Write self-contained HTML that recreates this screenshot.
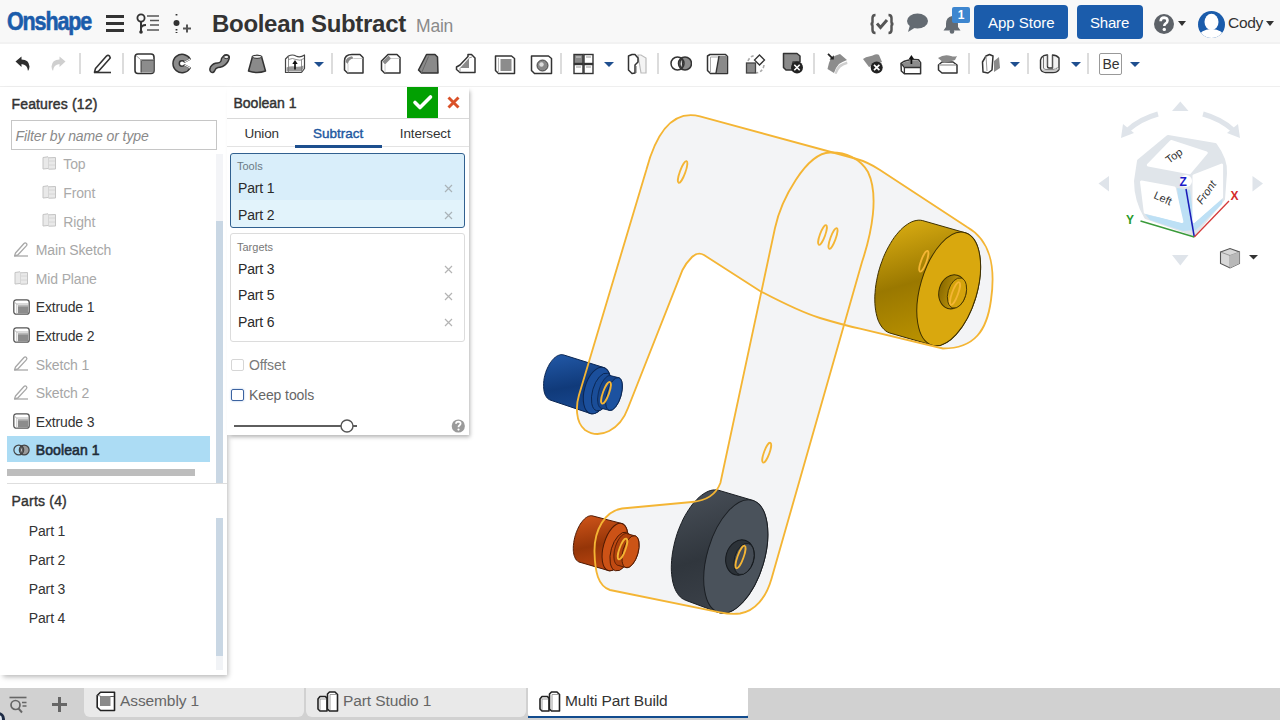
<!DOCTYPE html>
<html><head><meta charset="utf-8">
<style>
*{box-sizing:border-box;margin:0;padding:0}
html,body{width:1280px;height:720px;overflow:hidden;background:#fff;font-family:"Liberation Sans",sans-serif;color:#333;position:relative}
.abs{position:absolute}
.t{position:absolute;white-space:nowrap;line-height:1}
#topbar{position:absolute;left:0;top:0;width:1280px;height:44px;background:#f8f8f8;border-bottom:2px solid #f2f2f2}
#toolbar{position:absolute;left:0;top:44px;width:1280px;height:43px;background:#fff;border-bottom:1px solid #efefef}
.sep{position:absolute;top:53px;width:2px;height:21px;background:#dcdcdc}
.caret{position:absolute;width:0;height:0;border-left:5px solid transparent;border-right:5px solid transparent;border-top:5px solid #1f4f8f}
#panel{position:absolute;left:0;top:87px;width:227px;height:588px;background:#fff;box-shadow:2px 3px 5px -1px rgba(0,0,0,.28)}
#dlg{position:absolute;left:227px;top:87px;width:242px;height:348px;background:#fff;box-shadow:2px 3px 4px -1px rgba(0,0,0,.3)}
#bottombar{position:absolute;left:0;top:688px;width:1280px;height:32px;background:#d1d1d1}
.tab{position:absolute;top:688px;height:29px;background:#e9e9e9;border-radius:0 0 6px 6px}
</style></head><body>

<div id="topbar">
 <div class="t" style="left:7px;top:9px;font-size:25px;font-weight:bold;color:#1b5cab;letter-spacing:-1.3px;-webkit-text-stroke:0.6px #1b5cab;transform:scaleX(0.86);transform-origin:0 0">Onshape</div>
 <!-- hamburger -->
 <div class="abs" style="left:106px;top:15px;width:18px;height:3px;background:#333"></div>
 <div class="abs" style="left:106px;top:22px;width:18px;height:3px;background:#333"></div>
 <div class="abs" style="left:106px;top:29px;width:18px;height:3px;background:#333"></div>
 <!-- tree icon -->
 <svg class="abs" style="left:136px;top:13px" width="24" height="22" viewBox="0 0 24 22">
  <circle cx="5" cy="5" r="3.6" fill="none" stroke="#333" stroke-width="1.8"/>
  <path d="M5 8.6 V18.5" stroke="#333" stroke-width="2" fill="none"/>
  <path d="M5 16 Q5 12 10 12" stroke="#333" stroke-width="1.8" fill="none"/>
  <circle cx="5" cy="19" r="1.8" fill="#333"/>
  <path d="M11 3h12M14 7.5h9M14 12h9M11 17h12" stroke="#555" stroke-width="1.6"/>
 </svg>
 <!-- insert icon -->
 <svg class="abs" style="left:172px;top:13px" width="20" height="22" viewBox="0 0 20 22">
  <path d="M4.5 1v3M4.5 16v4" stroke="#333" stroke-width="1.8" stroke-dasharray="1.6 1.4"/>
  <circle cx="4.5" cy="10" r="3" fill="#333"/>
  <path d="M11 15.5h8M15 11.5v8" stroke="#555" stroke-width="2"/>
 </svg>
 <div class="t" style="left:212px;top:12px;font-size:24px;font-weight:bold;color:#333;letter-spacing:-0.3px">Boolean Subtract</div>
 <div class="t" style="left:416px;top:18px;font-size:17.5px;color:#8a8a8a;letter-spacing:-0.2px">Main</div>
 <!-- right icons -->
 <svg class="abs" style="left:869px;top:13px" width="26" height="22" viewBox="0 0 26 22">
  <path d="M6.5 2 Q3.5 2 3.5 5 V9 Q3.5 11 1.5 11 Q3.5 11 3.5 13 V17 Q3.5 20 6.5 20" fill="none" stroke="#555" stroke-width="2.5"/>
  <path d="M19.5 2 Q22.5 2 22.5 5 V9 Q22.5 11 24.5 11 Q22.5 11 22.5 13 V17 Q22.5 20 19.5 20" fill="none" stroke="#555" stroke-width="2.5"/>
  <path d="M8 10.5 L11.5 14.5 L18 7" fill="none" stroke="#555" stroke-width="3"/>
 </svg>
 <svg class="abs" style="left:906px;top:13px" width="23" height="20" viewBox="0 0 23 20">
  <ellipse cx="11.5" cy="8" rx="10.5" ry="7.5" fill="#646b72"/>
  <path d="M4 12 L2 19 L10 14 Z" fill="#646b72"/>
 </svg>
 <svg class="abs" style="left:942px;top:14px" width="22" height="20" viewBox="0 0 22 20">
  <path d="M10 2 Q4 3 4 10 V13 L1.5 16.5 H18.5 L16 13 V10 Q16 3 10 2Z" fill="#646b72"/>
  <circle cx="10" cy="17.5" r="2.3" fill="#646b72"/>
 </svg>
 <div class="abs" style="left:952px;top:7px;width:18px;height:16px;background:#3d86cf;border-radius:2px;color:#fff;font-size:12px;font-weight:bold;text-align:center;line-height:16px">1</div>
 <div class="abs" style="left:974px;top:5px;width:94px;height:34px;background:#1b5cab;border-radius:4px"></div>
 <div class="t" style="left:988px;top:15px;font-size:15px;color:#fff">App Store</div>
 <div class="abs" style="left:1077px;top:5px;width:66px;height:34px;background:#1b5cab;border-radius:4px"></div>
 <div class="t" style="left:1090px;top:15px;font-size:15px;color:#fff;letter-spacing:-0.2px">Share</div>
 <svg class="abs" style="left:1153px;top:13px" width="22" height="22" viewBox="0 0 22 22">
  <circle cx="11" cy="11" r="10" fill="#5d6268"/>
  <path d="M7.6 8.2 Q7.8 4.6 11.2 4.6 Q14.6 4.8 14.5 7.8 Q14.4 9.6 12.5 10.6 Q11.3 11.3 11.3 13" fill="none" stroke="#fff" stroke-width="2.6"/>
  <circle cx="11.3" cy="16.4" r="1.7" fill="#fff"/>
 </svg>
 <div class="caret" style="left:1178px;top:21px;border-top-color:#333;border-left-width:4.5px;border-right-width:4.5px"></div>
 <svg class="abs" style="left:1197px;top:10px" width="29" height="29" viewBox="0 0 29 29">
  <defs><clipPath id="avc"><circle cx="14.5" cy="14.5" r="13.5"/></clipPath></defs>
  <circle cx="14.5" cy="14.5" r="13.5" fill="#1b5cab"/>
  <g clip-path="url(#avc)" fill="#fff">
   <ellipse cx="14.5" cy="12" rx="7" ry="8.3"/>
   <path d="M1 29 Q2 19.5 14.5 19 Q27 19.5 28 29Z"/>
  </g>
 </svg>
 <div class="t" style="left:1228px;top:15px;font-size:15.5px;color:#333;letter-spacing:-0.3px">Cody</div>
 <div class="caret" style="left:1266px;top:21px;border-top-color:#333;border-left-width:4.5px;border-right-width:4.5px"></div>
</div>
<div id="toolbar"></div>
<div id="tbicons">
<svg class="abs" style="left:14px;top:55px" width="17" height="17" viewBox="0 0 17 17"><path d="M1.5 6.5 L7.5 1.5 V4.5 Q15 4.5 15.5 11.5 Q15.5 13.5 14 16 Q13.5 9.5 7.5 9 V12 Z" fill="#2e2e2e"/></svg>
<svg class="abs" style="left:50px;top:55px" width="17" height="17" viewBox="0 0 17 17"><path d="M15.5 6.5 L9.5 1.5 V4.5 Q2 4.5 1.5 11.5 Q1.5 13.5 3 16 Q3.5 9.5 9.5 9 V12 Z" fill="#cfcfcf"/></svg>
<div class="sep" style="left:79px"></div>
<div class="sep" style="left:122px"></div>
<div class="sep" style="left:331px"></div>
<div class="sep" style="left:560px"></div>
<div class="sep" style="left:657px"></div>
<div class="sep" style="left:813px"></div>
<div class="sep" style="left:968px"></div>
<div class="sep" style="left:1027px"></div>
<div class="sep" style="left:1087px"></div>
<svg class="abs" style="left:92px;top:53px" width="20" height="21" viewBox="0 0 20 21"><path d="M3.5 15.5 L14.5 3 Q16 1.6 17.5 3 Q18.8 4.5 17.4 6 L6.5 18.2 L2.5 19.2 Z" fill="none" stroke="#333" stroke-width="1.6" stroke-linejoin="round"/><path d="M2 19.5 H19" stroke="#333" stroke-width="1.6"/></svg>
<svg class="abs" style="left:134px;top:53px" width="21" height="22" viewBox="0 0 21 22"><rect x="1" y="1" width="19" height="19.5" rx="3" fill="#fff" stroke="#333" stroke-width="1.6"/><path d="M2 2.5 L6.5 6.5 H19.5 M6.5 6.5 V19.5" stroke="#999" stroke-width="0.9" fill="none"/><rect x="7.5" y="7.5" width="12" height="12" fill="#8c8c8c"/><path d="M7.5 7.5 H19.5 M7.5 7.5 V19.5" stroke="#555" stroke-width="0.9"/></svg>
<svg class="abs" style="left:172px;top:53px" width="20" height="21" viewBox="0 0 20 21"><path d="M18.2 6 A9.2 9.2 0 1 0 18.2 15 L12.5 12 Q11.5 13.2 10 13.2 A2.7 2.7 0 0 1 10 7.8 Q11.5 7.8 12.5 9 Z" fill="#8c8c8c" stroke="#333" stroke-width="1.5" stroke-linejoin="round"/><path d="M12.5 9 L18.2 6 M12.5 12 L18.2 15" stroke="#eee" stroke-width="1.2"/></svg>
<svg class="abs" style="left:208px;top:53px" width="23" height="22" viewBox="0 0 23 22"><path d="M3 19 Q1 17 2.5 14 Q5 10 9.5 10 Q12 10 13 8 Q13 5 15.5 3 Q17 1.5 19.5 2 Q22 3 21 6 Q19.5 11 14.5 13.5 Q12 14.5 10 14.5 Q7.5 15 6.5 18 Q5 20.5 3 19 Z" fill="#8c8c8c" stroke="#333" stroke-width="1.5" stroke-linejoin="round"/><ellipse cx="18.3" cy="4" rx="2.6" ry="1.6" fill="#eee" stroke="#333" stroke-width="1"/></svg>
<svg class="abs" style="left:247px;top:53px" width="20" height="21" viewBox="0 0 20 21"><path d="M5.5 3.5 Q10 1.5 14.5 3.5 L18.5 18 Q10 21 1.5 18 Z" fill="#8a8a8a" stroke="#333" stroke-width="1.5" stroke-linejoin="round"/><ellipse cx="10" cy="3.8" rx="4.5" ry="1.6" fill="#eee" stroke="#333" stroke-width="1"/></svg>
<svg class="abs" style="left:284px;top:52px" width="22" height="23" viewBox="0 0 22 23"><path d="M1.5 7 L4.5 4 Q8.5 2 12 4 Q16 6 20.5 3 V16.5 L17.5 20.5 H1.5 Z" fill="#fff" stroke="#444" stroke-width="1.2" stroke-linejoin="round"/><path d="M2.5 15.5 Q7 13.5 11 14.5 Q15 15.5 19.5 13.5 V16.5 L17 19.5 H2.5Z" fill="#999"/><path d="M4.5 4 V20.5 M4.5 7.5 Q8.5 5.5 12 7.5 Q16 9.5 20 6.5 M17.5 8 V20.5" fill="none" stroke="#777" stroke-width="0.8"/><path d="M11 17.5 V10" stroke="#111" stroke-width="1.7"/><path d="M8.3 12 L11 8 L13.7 12Z" fill="#111"/></svg>
<div class="caret" style="left:314px;top:62px"></div>
<svg class="abs" style="left:343px;top:53px" width="22" height="22" viewBox="0 0 22 22"><path d="M1.5 8 Q1.5 1.5 9 1.5 H17 L20 4.5 V20 H4.5 L1.5 17 Z" fill="#fff" stroke="#333" stroke-width="1.5" stroke-linejoin="round"/><path d="M2.5 9 Q3 4 9 3.2 L10.5 5.5 Q5.5 6 5 11 Z" fill="#8a8a8a"/><path d="M5 11 V19.5 M10.5 5.5 H19.5" stroke="#ccc" stroke-width="1"/></svg>
<svg class="abs" style="left:380px;top:53px" width="22" height="22" viewBox="0 0 22 22"><path d="M1.5 8 L8 1.5 H17 L20 4.5 V20 H4.5 L1.5 17 Z" fill="#fff" stroke="#333" stroke-width="1.5" stroke-linejoin="round"/><path d="M2.5 8.5 L8.5 2.5 L11 5.5 L5 11.5 Z" fill="#8a8a8a"/><path d="M5 11.5 V19.5 M11 5.5 H19.5" stroke="#ccc" stroke-width="1"/></svg>
<svg class="abs" style="left:417px;top:53px" width="23" height="22" viewBox="0 0 23 22"><path d="M1.5 17 L9.5 1.5 H18 L20.5 4 L21 20 H4.5 Z" fill="#8a8a8a" stroke="#333" stroke-width="1.5" stroke-linejoin="round"/><path d="M4.5 20 L11.5 3.5" stroke="#666" stroke-width="1"/></svg>
<svg class="abs" style="left:455px;top:53px" width="22" height="22" viewBox="0 0 22 22"><path d="M1.5 14 L5 12 L13 3.5 V1.5 H16.5 L20 5 V19.5 H5 L1.5 16.5 Z" fill="#fff" stroke="#333" stroke-width="1.5" stroke-linejoin="round"/><path d="M5 15 L14 5 V15 Z" fill="#8a8a8a"/><path d="M5 15 V19 M14 5 L17 4" stroke="#999" stroke-width="1"/></svg>
<svg class="abs" style="left:494px;top:53px" width="22" height="22" viewBox="0 0 22 22"><path d="M1.5 3 H17.5 L20.5 5.5 V20.5 H4.5 L1.5 17.5 Z" fill="#fff" stroke="#333" stroke-width="1.5" stroke-linejoin="round"/><rect x="6.5" y="6" width="11" height="12" fill="#8c8c8c"/><path d="M4.5 5 V20" stroke="#bbb" stroke-width="1"/></svg>
<svg class="abs" style="left:530px;top:53px" width="23" height="22" viewBox="0 0 23 22"><path d="M1.5 3 H18.5 L21.5 5.5 V20.5 H4.5 L1.5 17.5 Z" fill="#fff" stroke="#333" stroke-width="1.5" stroke-linejoin="round"/><circle cx="12.5" cy="12.5" r="5.5" fill="#888" stroke="#444" stroke-width="1"/><circle cx="11.5" cy="11.5" r="2.2" fill="#ddd"/></svg>
<svg class="abs" style="left:573px;top:53px" width="21" height="22" viewBox="0 0 21 22"><rect x="1" y="1.5" width="9" height="9" fill="#888" stroke="#333" stroke-width="1.4"/><rect x="11" y="1.5" width="9" height="9" fill="#fff" stroke="#333" stroke-width="1.4"/><rect x="1" y="11.5" width="9" height="9" fill="#fff" stroke="#333" stroke-width="1.4"/><rect x="11" y="11.5" width="9" height="9" fill="#fff" stroke="#333" stroke-width="1.4"/><path d="M3 4 H8 M13 4 H18 M3 14 H8 M13 14 H18" stroke="#bbb" stroke-width="1.5"/></svg>
<div class="caret" style="left:604px;top:62px"></div>
<svg class="abs" style="left:627px;top:53px" width="22" height="22" viewBox="0 0 22 22"><path d="M11 2 H14 L19 5 V20 H14 Z" fill="#f4f4f4" stroke="#bbb" stroke-width="1.2"/><path d="M1.5 3 L5 1.5 H8 L11 5 V9 L8 12 V20 L5 20.5 L1.5 17 Z" fill="#fff" stroke="#333" stroke-width="1.5" stroke-linejoin="round"/><path d="M9 13 V20" stroke="#666" stroke-width="1"/></svg>
<svg class="abs" style="left:670px;top:55px" width="22" height="17" viewBox="0 0 22 17"><circle cx="15" cy="8.5" r="6.5" fill="#8c8c8c" stroke="#333" stroke-width="1.5"/><circle cx="7.5" cy="8.5" r="6.5" fill="none" stroke="#333" stroke-width="1.5"/><path d="M11.3 3.2 Q8.8 8.5 11.3 13.8 Q13.6 8.5 11.3 3.2Z" fill="#fff" stroke="#333" stroke-width="1.2"/></svg>
<svg class="abs" style="left:706px;top:53px" width="23" height="22" viewBox="0 0 23 22"><path d="M1.5 3 L4 1.5 H19.5 L21.5 3.5 V20.5 H4.5 L1.5 17.5 Z" fill="#fff" stroke="#333" stroke-width="1.5" stroke-linejoin="round"/><path d="M13 3 H21 V20 H10 Z" fill="#8a8a8a"/><path d="M4.5 4 V20 M4.5 4 H13" stroke="#aaa" stroke-width="1"/><path d="M13 3 L10 20" stroke="#333" stroke-width="1.4"/></svg>
<svg class="abs" style="left:745px;top:53px" width="22" height="22" viewBox="0 0 22 22"><path d="M3 8 Q5 3 10 2.5 M19 12 Q18 19 11 20" fill="none" stroke="#aaa" stroke-width="1.6" stroke-dasharray="3 2"/><rect x="1.5" y="10" width="9" height="10" fill="#8a8a8a" stroke="#444" stroke-width="1.3"/><path d="M14.5 2 L19.5 7 L14.5 12 L9.5 7 Z" fill="#fff" stroke="#333" stroke-width="1.3"/></svg>
<svg class="abs" style="left:782px;top:52px" width="22" height="23" viewBox="0 0 22 23"><path d="M1.5 1.5 H15 L18 4 V10 H11 V18 H4 L1.5 15.5 Z" fill="#8a8a8a" stroke="#333" stroke-width="1.5" stroke-linejoin="round"/><circle cx="15" cy="15.5" r="6" fill="#222"/><path d="M12.3 12.8 L17.7 18.2 M17.7 12.8 L12.3 18.2" stroke="#fff" stroke-width="1.6"/></svg>
<svg class="abs" style="left:826px;top:53px" width="22" height="22" viewBox="0 0 22 22"><path d="M5 5 Q10 2 14 1 L21 7 Q16 9 13 11 Q10 14 8 20 L1.5 16 Q2.5 10 5 5Z" fill="#8c8c8c"/><path d="M13 12 Q17 9.5 21 8.5 L21.5 11 Q17 12 14.5 14.5 Q12 17 10.5 21 L8.5 20.5 Q10 15 13 12Z" fill="#cfcfcf"/><path d="M2 0.8 L6.5 5.3" stroke="#222" stroke-width="1.8"/><path d="M3.5 6.5 H7.8 V2.2Z" fill="#222"/></svg>
<svg class="abs" style="left:862px;top:53px" width="22" height="22" viewBox="0 0 22 22"><path d="M1 6 Q4 3.5 7 3.5 Q10 3 13 1.5 Q16 1 17 2 L20 9 L13 12 L7 14 L4 10 Z" fill="#8c8c8c"/><circle cx="14.7" cy="14.5" r="6" fill="#222"/><path d="M12 11.8 L17.4 17.2 M17.4 11.8 L12 17.2" stroke="#fff" stroke-width="1.7"/></svg>
<svg class="abs" style="left:900px;top:52px" width="22" height="23" viewBox="0 0 22 23"><path d="M1 11.3 L4.4 9.2 Q11 6.5 18.5 7.8 L20.6 10.6 V21.8 H4.4 L1.3 19 Z" fill="#fff" stroke="#333" stroke-width="1.5" stroke-linejoin="round"/><path d="M4.8 10 Q11 7.6 18.3 8.8 L20 11 V15 H5 L2 11.8Z" fill="#8c8c8c"/><path d="M1.3 11.5 L4.4 15.5 H21 M4.4 15.5 V21.5" stroke="#333" stroke-width="1.3" fill="none"/><path d="M11.4 12 V6" stroke="#111" stroke-width="1.7"/><path d="M8.8 7 L11.4 3 L14 7Z" fill="#111"/></svg>
<svg class="abs" style="left:937px;top:53px" width="22" height="22" viewBox="0 0 22 22"><path d="M1.5 12 L5 9 H16 L20 12 V20 H5 L1.5 17 Z" fill="#fff" stroke="#333" stroke-width="1.5" stroke-linejoin="round"/><path d="M2 12 H19" stroke="#aaa" stroke-width="1.5"/><path d="M1 5 Q7 1 14 3 Q17 4 20 3 L18 7 Q12 9 7 10 Z" fill="#8a8a8a"/></svg>
<svg class="abs" style="left:981px;top:53px" width="20" height="22" viewBox="0 0 20 22"><path d="M1.5 9 L5 3 L8.5 1.5 L12 3 L11 17 L7 20 L2 19 Z" fill="#fff" stroke="#333" stroke-width="1.5" stroke-linejoin="round"/><path d="M13 8 L18 4 L19 15 L13 19 Z" fill="#8a8a8a"/><path d="M5 3 L6 18" stroke="#999" stroke-width="1"/></svg>
<div class="caret" style="left:1010px;top:62px"></div>
<svg class="abs" style="left:1039px;top:53px" width="22" height="21" viewBox="0 0 22 21"><path d="M2.5 4.5 Q5 1.5 8.5 2 V13.5 Q8.5 15 10 15 H13.5 V2 Q17.5 2 20 5 V16.5 Q18 19.5 14 19.5 H6.5 Q2 19 1.5 15.5 V7 Z" fill="#f2f2f2" stroke="#333" stroke-width="1.4" stroke-linejoin="round"/><path d="M4.5 4 V15 Q5 16.5 7 16.5 H14 Q17 16.5 18.5 14.5" fill="none" stroke="#666" stroke-width="0.9"/><path d="M5 16.8 H14 Q17 16.8 19.5 15 V16.5 Q17.5 19 14 19 H6.5 Q3.5 18.7 3 16Z" fill="#c8c8c8"/><path d="M13.5 2.5 V15 M8.5 2 V13" stroke="#555" stroke-width="1"/></svg>
<div class="caret" style="left:1071px;top:62px"></div>
<div class="abs" style="left:1099px;top:53px;width:23px;height:22px;border:1px solid #999;border-radius:2px;background:#fff"></div>
<div class="t" style="left:1102.5px;top:57px;font-size:14px;color:#333">Be</div>
<div class="caret" style="left:1130px;top:62px"></div>
</div>

<!-- viewport model -->
<svg class="abs" style="left:0;top:0" width="1280" height="720" viewBox="0 0 1280 720" id="model">
<defs>
<linearGradient id="gGold" x1="0" y1="0" x2="0.25" y2="1"><stop offset="0" stop-color="#e0b214"/><stop offset="0.55" stop-color="#9a7800"/><stop offset="1" stop-color="#b89000"/></linearGradient>
<linearGradient id="gGray" x1="0" y1="0" x2="0.25" y2="1"><stop offset="0" stop-color="#4a515a"/><stop offset="0.6" stop-color="#30363d"/><stop offset="1" stop-color="#3a4048"/></linearGradient>
<linearGradient id="gBlue" x1="0" y1="0" x2="0.2" y2="1"><stop offset="0" stop-color="#2259a8"/><stop offset="0.6" stop-color="#103a7a"/><stop offset="1" stop-color="#17478f"/></linearGradient>
<linearGradient id="gOr" x1="0" y1="0" x2="0.2" y2="1"><stop offset="0" stop-color="#d2561a"/><stop offset="0.6" stop-color="#953508"/><stop offset="1" stop-color="#b8440f"/></linearGradient>
<linearGradient id="gHubG" x1="0" y1="0" x2="1" y2="0"><stop offset="0" stop-color="#8a6a00"/><stop offset="1" stop-color="#d8aa10"/></linearGradient>
</defs>
<path d="M646.3 170 Q663 107 700 116.4 L855 158.5 Q868 162 880 170 L967 227 C990 240 996 265 991 300 C987 330 975 348.5 943 348.5 L860 328.7 Q845 325.5 820 318 Q800 312 760 291 L704 255 Q698 251.5 692 257 Q686 263 682.5 270 L628 408 C620 430 600 440 585 430 C575 422 576 405 579 395 Z" fill="#f3f4f6"/>
<path d="M830 152.5 C806 153 781 200 775 228 L720.4 483 Q714 500 692 502 L622 508.5 C605 511 594 530 594.5 552 C595 572 598 586 610 590 L720 612.3 Q730 614.5 740 613.5 C755 611 766 598 771.5 578.7 L862 262 C872 232 879 195 868 172 C860 158 845 152 830 152.5 Z" fill="#f3f4f6"/>
<path d="M874.8 299.9 L874.8 296.2 L875.1 292.5 L875.4 288.6 L875.9 284.7 L876.6 280.8 L877.4 276.8 L878.3 272.8 L879.4 268.9 L880.6 265.0 L882.0 261.2 L883.4 257.4 L885.0 253.7 L886.7 250.2 L888.5 246.8 L890.4 243.5 L892.3 240.4 L894.3 237.4 L896.4 234.7 L898.6 232.1 L900.7 229.8 L902.9 227.7 L905.1 225.9 L907.4 224.3 L909.6 222.9 L911.8 221.8 L914.0 221.0 L916.1 220.5 L918.2 220.2 L920.3 220.2 L922.3 220.5 L964.3 232.5 L966.2 233.1 L968.0 233.9 L969.7 235.0 L971.3 236.4 L972.8 238.0 L974.2 239.9 L975.5 242.0 L976.7 244.3 L977.7 246.9 L978.5 249.6 L979.2 252.6 L979.8 255.7 L980.2 259.0 L980.5 262.4 L980.6 266.0 L980.6 269.6 L980.3 273.4 L980.0 277.3 L979.5 281.2 L978.8 285.1 L978.0 289.1 L977.1 293.0 L976.0 297.0 L974.8 300.9 L973.4 304.7 L972.0 308.5 L970.4 312.1 L968.7 315.7 L966.9 319.1 L965.0 322.4 L963.1 325.5 L961.1 328.5 L959.0 331.2 L956.8 333.7 L954.7 336.1 L952.5 338.1 L950.3 340.0 L948.0 341.6 L945.8 342.9 L943.6 344.0 L941.4 344.8 L939.3 345.4 L937.2 345.7 L935.1 345.6 L933.1 345.4 L891.1 333.4 L889.2 332.8 L887.4 332.0 L885.7 330.9 L884.1 329.5 L882.6 327.9 L881.2 326.0 L879.9 323.9 L878.7 321.6 L877.7 319.0 L876.9 316.3 L876.2 313.3 L875.6 310.2 L875.2 306.9 L874.9 303.5Z" fill="url(#gGold)" stroke="#3e3000" stroke-width="1"/><ellipse cx="948.7" cy="288.9" rx="28.4" ry="58.6" transform="rotate(16.4 948.7 288.9)" fill="#d9a80e" stroke="#3e3000" stroke-width="1"/><ellipse cx="952.5" cy="291.8" rx="13.5" ry="17.3" transform="rotate(16 952.5 291.8)" fill="url(#gHubG)" stroke="#3e3000" stroke-width="1"/><ellipse cx="957" cy="293" rx="9" ry="15.5" transform="rotate(16 957 293)" fill="#d4a30c" stroke="#3e3000" stroke-width="0.8"/>
<path d="M671.3 567.8 L671.4 564.2 L671.6 560.5 L672.0 556.7 L672.5 552.9 L673.2 549.1 L674.0 545.2 L674.9 541.3 L676.0 537.4 L677.2 533.6 L678.5 529.9 L680.0 526.2 L681.6 522.6 L683.2 519.1 L685.0 515.7 L686.9 512.5 L688.8 509.5 L690.8 506.6 L692.8 503.9 L695.0 501.5 L697.1 499.2 L699.3 497.1 L701.5 495.3 L703.6 493.8 L705.8 492.5 L708.0 491.4 L710.2 490.6 L712.3 490.1 L714.3 489.9 L716.3 489.9 L718.3 490.2 L751.6 500.0 L753.5 500.6 L755.3 501.5 L757.1 502.6 L758.7 503.9 L760.2 505.6 L761.6 507.4 L762.8 509.6 L764.0 511.9 L765.0 514.5 L765.8 517.2 L766.5 520.2 L767.1 523.3 L767.5 526.6 L767.7 530.1 L767.8 533.6 L767.8 537.3 L767.6 541.1 L767.2 544.9 L766.7 548.8 L766.0 552.8 L765.2 556.7 L764.2 560.7 L763.1 564.6 L761.8 568.5 L760.5 572.4 L759.0 576.1 L757.4 579.8 L755.7 583.3 L753.9 586.8 L752.0 590.0 L750.0 593.1 L748.0 596.1 L745.9 598.8 L743.7 601.3 L741.5 603.7 L739.3 605.7 L737.1 607.6 L734.9 609.2 L732.6 610.5 L730.4 611.6 L728.2 612.4 L726.1 612.9 L723.9 613.2 L721.9 613.2 L719.9 612.9 L718.0 612.3 L685.4 600.2 L683.6 599.3 L681.9 598.3 L680.3 596.9 L678.8 595.3 L677.5 593.5 L676.2 591.4 L675.1 589.1 L674.1 586.6 L673.3 583.9 L672.6 581.0 L672.1 577.9 L671.7 574.7 L671.4 571.3Z" fill="url(#gGray)" stroke="#1b1f24" stroke-width="1"/><ellipse cx="735.8" cy="556.5" rx="28.5" ry="58.6" transform="rotate(16.7 735.8 556.5)" fill="#4a525b" stroke="#1b1f24" stroke-width="1"/><ellipse cx="740" cy="557.5" rx="14" ry="18" transform="rotate(16 740 557.5)" fill="#2c3238" stroke="#15191d" stroke-width="1"/><ellipse cx="744" cy="559" rx="9.5" ry="16" transform="rotate(16 744 559)" fill="#454c55" stroke="#15191d" stroke-width="0.8"/>
<path d="M543.6 385.1 L543.6 383.6 L543.7 382.1 L543.9 380.5 L544.1 378.9 L544.4 377.3 L544.8 375.7 L545.2 374.1 L545.7 372.6 L546.2 371.0 L546.8 369.5 L547.5 368.0 L548.2 366.6 L548.9 365.2 L549.6 363.9 L550.4 362.7 L551.3 361.5 L552.1 360.4 L553.0 359.4 L553.9 358.4 L554.9 357.6 L555.8 356.9 L556.7 356.2 L557.7 355.7 L558.6 355.3 L559.5 355.0 L560.4 354.7 L561.3 354.6 L562.2 354.7 L563.1 354.8 L563.9 355.0 L604.0 367.6 L604.8 367.9 L605.6 368.4 L606.3 368.9 L607.0 369.6 L607.6 370.4 L608.2 371.3 L608.7 372.2 L609.2 373.3 L609.6 374.4 L610.0 375.7 L610.2 377.0 L610.5 378.3 L610.6 379.7 L610.7 381.2 L610.7 382.7 L610.7 384.3 L610.6 385.8 L610.4 387.5 L610.1 389.1 L609.8 390.7 L609.4 392.3 L609.0 393.9 L608.5 395.5 L608.0 397.1 L607.4 398.7 L606.7 400.2 L606.0 401.6 L605.3 403.0 L604.5 404.4 L603.7 405.6 L602.8 406.8 L602.0 408.0 L601.0 409.0 L600.1 410.0 L599.2 410.8 L598.2 411.6 L597.3 412.2 L596.3 412.7 L595.4 413.2 L594.4 413.5 L593.5 413.7 L592.6 413.8 L591.7 413.8 L590.8 413.7 L590.0 413.4 L550.1 400.0 L549.3 399.6 L548.6 399.2 L547.9 398.6 L547.2 398.0 L546.6 397.2 L546.0 396.3 L545.5 395.4 L545.0 394.4 L544.6 393.2 L544.3 392.0 L544.0 390.8 L543.8 389.4 L543.7 388.1 L543.6 386.6Z" fill="url(#gBlue)" stroke="#0b2652" stroke-width="1"/><ellipse cx="597.0" cy="390.5" rx="12.5" ry="24.0" transform="rotate(16.0 597.0 390.5)" fill="#1b4f9c" stroke="#0b2652" stroke-width="1"/><ellipse cx="602" cy="392" rx="9.5" ry="19.5" transform="rotate(16 602 392)" fill="#1a4d98" stroke="#0b2652" stroke-width="0.9"/><path d="M597.6 400.0 L597.6 399.0 L597.7 397.9 L597.8 396.8 L597.9 395.7 L598.1 394.6 L598.3 393.5 L598.5 392.3 L598.8 391.2 L599.1 390.0 L599.4 388.9 L599.8 387.8 L600.2 386.7 L600.6 385.6 L601.1 384.5 L601.6 383.5 L602.1 382.6 L602.6 381.7 L603.2 380.8 L603.7 380.0 L604.3 379.2 L604.9 378.5 L605.4 377.9 L606.0 377.3 L606.6 376.9 L607.2 376.4 L607.8 376.1 L608.3 375.8 L608.9 375.7 L609.4 375.6 L609.9 375.5 L610.4 375.6 L618.4 377.6 L618.9 377.7 L619.4 378.0 L619.8 378.3 L620.2 378.6 L620.6 379.1 L620.9 379.6 L621.2 380.2 L621.5 380.8 L621.8 381.6 L622.0 382.3 L622.1 383.2 L622.2 384.1 L622.3 385.0 L622.4 386.0 L622.4 387.0 L622.3 388.1 L622.2 389.2 L622.1 390.3 L621.9 391.4 L621.7 392.5 L621.5 393.7 L621.2 394.8 L620.9 396.0 L620.6 397.1 L620.2 398.2 L619.8 399.3 L619.4 400.4 L618.9 401.5 L618.4 402.5 L617.9 403.4 L617.4 404.3 L616.8 405.2 L616.3 406.0 L615.7 406.8 L615.1 407.5 L614.6 408.1 L614.0 408.7 L613.4 409.1 L612.8 409.6 L612.2 409.9 L611.7 410.2 L611.1 410.3 L610.6 410.4 L610.1 410.5 L609.6 410.4 L601.6 408.4 L601.1 408.3 L600.6 408.0 L600.2 407.7 L599.8 407.4 L599.4 406.9 L599.1 406.4 L598.8 405.8 L598.5 405.2 L598.2 404.4 L598.0 403.7 L597.9 402.8 L597.8 401.9 L597.7 401.0Z" fill="#16458c" stroke="#0b2652" stroke-width="0.9"/><ellipse cx="614" cy="394" rx="7.2" ry="17" transform="rotate(16 614 394)" fill="#1c52a0" stroke="#0b2652" stroke-width="0.9"/>
<path d="M573.3 548.6 L573.3 547.1 L573.4 545.5 L573.6 544.0 L573.8 542.4 L574.0 540.8 L574.4 539.1 L574.7 537.5 L575.2 535.9 L575.7 534.3 L576.2 532.7 L576.8 531.2 L577.4 529.7 L578.1 528.2 L578.8 526.8 L579.5 525.4 L580.3 524.1 L581.1 522.9 L582.0 521.8 L582.8 520.7 L583.7 519.8 L584.5 518.9 L585.4 518.1 L586.3 517.5 L587.2 516.9 L588.1 516.4 L588.9 516.1 L589.8 515.9 L590.6 515.7 L591.4 515.7 L592.2 515.8 L621.4 523.4 L622.1 523.6 L622.9 523.9 L623.6 524.4 L624.2 524.9 L624.8 525.6 L625.4 526.4 L625.9 527.2 L626.4 528.2 L626.8 529.2 L627.1 530.4 L627.4 531.6 L627.6 532.9 L627.8 534.3 L627.9 535.7 L628.0 537.2 L627.9 538.7 L627.8 540.3 L627.7 541.9 L627.5 543.6 L627.2 545.2 L626.9 546.9 L626.5 548.5 L626.1 550.2 L625.6 551.8 L625.0 553.4 L624.4 555.0 L623.8 556.5 L623.1 558.0 L622.4 559.5 L621.6 560.9 L620.8 562.2 L620.0 563.4 L619.1 564.6 L618.3 565.6 L617.4 566.6 L616.5 567.5 L615.6 568.3 L614.7 569.0 L613.8 569.6 L612.9 570.0 L612.0 570.4 L611.1 570.6 L610.3 570.7 L609.4 570.8 L608.6 570.6 L607.9 570.4 L579.0 562.0 L578.3 561.6 L577.6 561.2 L577.0 560.6 L576.4 560.0 L575.8 559.2 L575.3 558.4 L574.9 557.4 L574.5 556.4 L574.1 555.3 L573.8 554.1 L573.6 552.8 L573.4 551.5 L573.3 550.1Z" fill="url(#gOr)" stroke="#4e1a04" stroke-width="1"/><ellipse cx="615.0" cy="547.0" rx="11.5" ry="24.5" transform="rotate(16.0 615.0 547.0)" fill="#cc5216" stroke="#4e1a04" stroke-width="1"/><ellipse cx="621" cy="551.5" rx="10" ry="20" transform="rotate(16 621 551.5)" fill="#c04a12" stroke="#4e1a04" stroke-width="0.9"/><path d="M613.9 556.1 L613.9 555.1 L614.0 554.0 L614.1 553.0 L614.2 551.9 L614.4 550.7 L614.6 549.6 L614.9 548.5 L615.2 547.4 L615.5 546.3 L615.9 545.2 L616.3 544.2 L616.7 543.1 L617.2 542.1 L617.7 541.1 L618.2 540.2 L618.7 539.3 L619.3 538.5 L619.8 537.7 L620.4 537.0 L621.0 536.3 L621.6 535.7 L622.2 535.2 L622.8 534.7 L623.4 534.3 L624.0 534.0 L624.6 533.8 L625.1 533.6 L625.7 533.5 L626.3 533.5 L626.8 533.6 L634.8 535.8 L635.3 535.9 L635.8 536.1 L636.2 536.4 L636.7 536.8 L637.1 537.3 L637.5 537.8 L637.8 538.4 L638.1 539.0 L638.4 539.7 L638.6 540.5 L638.8 541.3 L638.9 542.2 L639.0 543.1 L639.1 544.1 L639.1 545.1 L639.1 546.1 L639.0 547.2 L638.9 548.2 L638.8 549.3 L638.6 550.5 L638.4 551.6 L638.1 552.7 L637.8 553.8 L637.5 554.9 L637.1 556.0 L636.7 557.0 L636.3 558.1 L635.8 559.1 L635.3 560.1 L634.8 561.0 L634.3 561.9 L633.7 562.7 L633.2 563.5 L632.6 564.2 L632.0 564.9 L631.4 565.5 L630.8 566.0 L630.2 566.5 L629.6 566.9 L629.0 567.2 L628.4 567.4 L627.9 567.6 L627.3 567.7 L626.7 567.7 L626.2 567.6 L618.2 565.4 L617.7 565.3 L617.2 565.1 L616.8 564.8 L616.3 564.4 L615.9 563.9 L615.5 563.4 L615.2 562.8 L614.9 562.2 L614.6 561.5 L614.4 560.7 L614.2 559.9 L614.1 559.0 L614.0 558.1 L613.9 557.1Z" fill="#b0420d" stroke="#4e1a04" stroke-width="0.9"/><ellipse cx="630.5" cy="551.7" rx="7.6" ry="16.5" transform="rotate(16 630.5 551.7)" fill="#cc5416" stroke="#4e1a04" stroke-width="0.9"/>
<path d="M646.3 170 Q663 107 700 116.4 L855 158.5 Q868 162 880 170 L967 227 C990 240 996 265 991 300 C987 330 975 348.5 943 348.5 L860 328.7 Q845 325.5 820 318 Q800 312 760 291 L704 255 Q698 251.5 692 257 Q686 263 682.5 270 L628 408 C620 430 600 440 585 430 C575 422 576 405 579 395 Z" fill="none" stroke="#f4b534" stroke-width="1.85"/>
<path d="M830 152.5 C806 153 781 200 775 228 L720.4 483 Q714 500 692 502 L622 508.5 C605 511 594 530 594.5 552 C595 572 598 586 610 590 L720 612.3 Q730 614.5 740 613.5 C755 611 766 598 771.5 578.7 L862 262 C872 232 879 195 868 172 C860 158 845 152 830 152.5 Z" fill="none" stroke="#f4b534" stroke-width="1.85"/>
<ellipse cx="682.6" cy="172" rx="2.7" ry="11.5" transform="rotate(20 682.6 172)" fill="none" stroke="#f4b534" stroke-width="1.8"/>
<ellipse cx="822.5" cy="235" rx="2.6" ry="10.5" transform="rotate(20 822.5 235)" fill="none" stroke="#f4b534" stroke-width="1.8"/>
<ellipse cx="833" cy="238.5" rx="2.6" ry="11" transform="rotate(20 833 238.5)" fill="none" stroke="#f4b534" stroke-width="1.8"/>
<ellipse cx="766.7" cy="452.7" rx="2.7" ry="10.5" transform="rotate(20 766.7 452.7)" fill="none" stroke="#f4b534" stroke-width="1.8"/>
<ellipse cx="923.8" cy="261.3" rx="2.7" ry="11" transform="rotate(20 923.8 261.3)" fill="none" stroke="#f4b534" stroke-width="1.8"/>
<ellipse cx="955" cy="293.5" rx="3" ry="12" transform="rotate(20 955 293.5)" fill="none" stroke="#f4b534" stroke-width="1.8"/>
<ellipse cx="740.5" cy="557" rx="3" ry="12" transform="rotate(20 740.5 557)" fill="none" stroke="#f4b534" stroke-width="1.8"/>
<ellipse cx="606" cy="392.8" rx="3" ry="11.5" transform="rotate(20 606 392.8)" fill="none" stroke="#f4b534" stroke-width="1.8"/>
<ellipse cx="622.5" cy="549" rx="3" ry="11" transform="rotate(20 622.5 549)" fill="none" stroke="#f4b534" stroke-width="1.8"/>
</svg>

<svg class="abs" style="left:1090px;top:95px" width="185" height="180" viewBox="1090 95 185 180">
 <g fill="#dfe4ea">
  <path d="M1172 111 L1180.3 101.5 L1188.5 111 Z"/>
  <path d="M1109 176 L1098.5 183.5 L1109 191.5 Z"/>
  <path d="M1252.5 176 L1263 183.5 L1252.5 191.5 Z"/>
  <path d="M1172 255 L1180.3 265.5 L1188.5 255 Z"/>
 </g>
 <path d="M1158 114 Q1140 119 1128 130" fill="none" stroke="#dfe4ea" stroke-width="5"/>
 <path d="M1121 138 L1123 124 L1134 133 Z" fill="#dfe4ea"/>
 <path d="M1203 114 Q1221 119 1233 130" fill="none" stroke="#dfe4ea" stroke-width="5"/>
 <path d="M1240 138 L1238 124 L1227 133 Z" fill="#dfe4ea"/>
  <path d="M1168 137 L1215 145 Q1226 160 1225 173 L1223 199 L1194 234 L1146 217 Q1136 200 1136 181 L1139 161 Z" fill="#e0e5ea" stroke="#e0e5ea" stroke-width="4" stroke-linejoin="round"/>
 <path d="M1146 208 Q1149 214 1160 219 Q1180 228 1194 231 Q1212 216 1221 199 L1221 193 Q1208 210 1194 221 L1190 190 L1177 188 L1181 220 Q1162 214 1146 205 Z" fill="#bde0f5"/>
 <path d="M1171.2 141.5 L1206.3 152.9 L1189.5 172.7 L1148.3 165.1 Z" fill="#fff" stroke="#fff" stroke-width="3" stroke-linejoin="round"/>
 <path d="M1141.5 181.9 L1174.3 188 L1181.9 221.6 L1145.3 212.4 Z" fill="#fff" stroke="#fff" stroke-width="3" stroke-linejoin="round"/>
 <path d="M1194 175.8 L1221.6 165.1 L1221.6 197.2 L1194 221.6 Z" fill="#fff" stroke="#fff" stroke-width="3" stroke-linejoin="round"/>
 <path d="M1145 214 L1182 223.5 L1194 223.5 L1222.5 199 L1222 204 L1196 230 L1183 231 L1150 220 Z" fill="#bde0f5"/>
 <circle cx="1186" cy="181" r="6" fill="#fff"/>
 <text x="0" y="0" font-family="Liberation Sans" font-size="11" fill="#333" transform="translate(1169 164) rotate(-36)">Top</text>
 <text x="0" y="0" font-family="Liberation Sans" font-size="11" fill="#333" transform="translate(1153 198) rotate(24)">Left</text>
 <text x="0" y="0" font-family="Liberation Sans" font-size="11" font-style="italic" fill="#333" transform="translate(1202 205) rotate(-55)">Front</text>
<path d="M1194.3 237 L1186 189" stroke="#1b1bb8" stroke-width="1.5"/>
 <path d="M1194.3 237 L1140.5 221" stroke="#3a9a3a" stroke-width="1.5"/>
 <path d="M1194.3 237 L1229 201" stroke="#d43a3a" stroke-width="1.3"/>
 <text x="1179.5" y="186" font-family="Liberation Sans" font-size="12" font-weight="bold" fill="#1b1bc8">Z</text>
 <text x="1126" y="224" font-family="Liberation Sans" font-size="12" font-weight="bold" fill="#2a9a2a">Y</text>
 <text x="1230.5" y="200" font-family="Liberation Sans" font-size="12" font-weight="bold" fill="#d42a2a">X</text>
 <path d="M1220.5 252 L1230 248.5 L1239.5 252 V263.5 L1230 268 L1220.5 263.5 Z" fill="#d8d8d8" stroke="#555" stroke-width="1.1"/>
 <path d="M1220.5 252 L1230 255.5 L1239.5 252 M1230 255.5 V268" fill="none" stroke="#888" stroke-width="0.8"/>
 <path d="M1230 255.5 L1239.5 252 V263.5 L1230 268 Z" fill="#b8b8b8"/>
 <path d="M1249 255 L1258 255 L1253.5 259.5 Z" fill="#333"/>
</svg>
<div id="panel"></div>
<div id="pcontent">
<div class="t" style="left:11.5px;top:96.75px;font-size:14px;color:#333;letter-spacing:0.15px;-webkit-text-stroke:0.45px #333">Features (12)</div>
<div class="abs" style="left:11px;top:120px;width:206px;height:30px;border:1px solid #c6c6c6;background:#fff"></div>
<div class="t" style="left:15.5px;top:128.65px;font-size:14px;font-style:italic;color:#8a8a8a;letter-spacing:-0.1px">Filter by name or type</div>
<div class="abs" style="left:216px;top:154px;width:7px;height:329px;background:#f3f4f7"></div>
<div class="abs" style="left:216px;top:221px;width:7px;height:262px;background:#c9d7e4"></div>
<div class="abs" style="left:7px;top:436px;width:203px;height:26px;background:#acdcf4"></div>
<div class="t" style="left:63.3px;top:157.35px;font-size:14px;font-weight:normal;color:#aaa;letter-spacing:-0.15px">Top</div>
<svg class="abs" style="left:42px;top:156px" width="15" height="14" viewBox="0 0 15 14"><path d="M1 1.5 L6 0.8 L7 1.8 L13.5 1.5 V13 L7 13.2 L6 12.5 L1 13 Z" fill="#e9e9e9" stroke="#c4c4c4" stroke-width="1"/><path d="M6.5 1.5 V12.8 M7 5 H13 M7 9 H13" stroke="#d0d0d0" stroke-width="0.8"/></svg>
<div class="t" style="left:63.3px;top:185.95px;font-size:14px;font-weight:normal;color:#aaa;letter-spacing:-0.15px">Front</div>
<svg class="abs" style="left:42px;top:185px" width="15" height="14" viewBox="0 0 15 14"><path d="M1 1.5 L6 0.8 L7 1.8 L13.5 1.5 V13 L7 13.2 L6 12.5 L1 13 Z" fill="#e9e9e9" stroke="#c4c4c4" stroke-width="1"/><path d="M6.5 1.5 V12.8 M7 5 H13 M7 9 H13" stroke="#d0d0d0" stroke-width="0.8"/></svg>
<div class="t" style="left:63.3px;top:214.55px;font-size:14px;font-weight:normal;color:#aaa;letter-spacing:-0.15px">Right</div>
<svg class="abs" style="left:42px;top:213px" width="15" height="14" viewBox="0 0 15 14"><path d="M1 1.5 L6 0.8 L7 1.8 L13.5 1.5 V13 L7 13.2 L6 12.5 L1 13 Z" fill="#e9e9e9" stroke="#c4c4c4" stroke-width="1"/><path d="M6.5 1.5 V12.8 M7 5 H13 M7 9 H13" stroke="#d0d0d0" stroke-width="0.8"/></svg>
<div class="t" style="left:35.8px;top:243.15px;font-size:14px;font-weight:normal;color:#a6a6a6;letter-spacing:-0.15px">Main Sketch</div>
<svg class="abs" style="left:13px;top:241px" width="16" height="16" viewBox="0 0 16 16"><path d="M2.5 12 L11 2.5 Q12.2 1.3 13.4 2.5 Q14.5 3.7 13.3 4.9 L4.8 14 L1.6 14.8 Z" fill="none" stroke="#a8a8a8" stroke-width="1.3" stroke-linejoin="round"/><path d="M1.2 15 H15" stroke="#a8a8a8" stroke-width="1.3"/></svg>
<div class="t" style="left:35.8px;top:271.75px;font-size:14px;font-weight:normal;color:#aaa;letter-spacing:-0.15px">Mid Plane</div>
<svg class="abs" style="left:14px;top:271px" width="15" height="14" viewBox="0 0 15 14"><path d="M1 1.5 L6 0.8 L7 1.8 L13.5 1.5 V13 L7 13.2 L6 12.5 L1 13 Z" fill="#e9e9e9" stroke="#c4c4c4" stroke-width="1"/><path d="M6.5 1.5 V12.8 M7 5 H13 M7 9 H13" stroke="#d0d0d0" stroke-width="0.8"/></svg>
<div class="t" style="left:35.8px;top:300.35px;font-size:14px;font-weight:normal;color:#333;letter-spacing:-0.15px">Extrude 1</div>
<svg class="abs" style="left:13px;top:299px" width="17" height="16" viewBox="0 0 17 16"><rect x="0.8" y="0.8" width="15.4" height="14.4" rx="2.5" fill="#fff" stroke="#555" stroke-width="1.3"/><path d="M1 3 L3.8 5 H16" stroke="#aaa" stroke-width="0.9" fill="none"/><path d="M3.8 5 V15" stroke="#bbb" stroke-width="0.9"/><rect x="5" y="6" width="10.2" height="8.5" fill="#8c8c8c"/><rect x="5" y="6" width="10.2" height="1.6" fill="#b8b8b8"/></svg>
<div class="t" style="left:35.8px;top:328.95px;font-size:14px;font-weight:normal;color:#333;letter-spacing:-0.15px">Extrude 2</div>
<svg class="abs" style="left:13px;top:327px" width="17" height="16" viewBox="0 0 17 16"><rect x="0.8" y="0.8" width="15.4" height="14.4" rx="2.5" fill="#fff" stroke="#555" stroke-width="1.3"/><path d="M1 3 L3.8 5 H16" stroke="#aaa" stroke-width="0.9" fill="none"/><path d="M3.8 5 V15" stroke="#bbb" stroke-width="0.9"/><rect x="5" y="6" width="10.2" height="8.5" fill="#8c8c8c"/><rect x="5" y="6" width="10.2" height="1.6" fill="#b8b8b8"/></svg>
<div class="t" style="left:35.8px;top:357.55px;font-size:14px;font-weight:normal;color:#a6a6a6;letter-spacing:-0.15px">Sketch 1</div>
<svg class="abs" style="left:13px;top:355px" width="16" height="16" viewBox="0 0 16 16"><path d="M2.5 12 L11 2.5 Q12.2 1.3 13.4 2.5 Q14.5 3.7 13.3 4.9 L4.8 14 L1.6 14.8 Z" fill="none" stroke="#a8a8a8" stroke-width="1.3" stroke-linejoin="round"/><path d="M1.2 15 H15" stroke="#a8a8a8" stroke-width="1.3"/></svg>
<div class="t" style="left:35.8px;top:386.15px;font-size:14px;font-weight:normal;color:#a6a6a6;letter-spacing:-0.15px">Sketch 2</div>
<svg class="abs" style="left:13px;top:384px" width="16" height="16" viewBox="0 0 16 16"><path d="M2.5 12 L11 2.5 Q12.2 1.3 13.4 2.5 Q14.5 3.7 13.3 4.9 L4.8 14 L1.6 14.8 Z" fill="none" stroke="#a8a8a8" stroke-width="1.3" stroke-linejoin="round"/><path d="M1.2 15 H15" stroke="#a8a8a8" stroke-width="1.3"/></svg>
<div class="t" style="left:35.8px;top:414.75px;font-size:14px;font-weight:normal;color:#333;letter-spacing:-0.15px">Extrude 3</div>
<svg class="abs" style="left:13px;top:413px" width="17" height="16" viewBox="0 0 17 16"><rect x="0.8" y="0.8" width="15.4" height="14.4" rx="2.5" fill="#fff" stroke="#555" stroke-width="1.3"/><path d="M1 3 L3.8 5 H16" stroke="#aaa" stroke-width="0.9" fill="none"/><path d="M3.8 5 V15" stroke="#bbb" stroke-width="0.9"/><rect x="5" y="6" width="10.2" height="8.5" fill="#8c8c8c"/><rect x="5" y="6" width="10.2" height="1.6" fill="#b8b8b8"/></svg>
<div class="t" style="left:35.8px;top:443.35px;font-size:14px;color:#1f2d3a;letter-spacing:0.1px;-webkit-text-stroke:0.6px #1f2d3a">Boolean 1</div>
<svg class="abs" style="left:13px;top:444px" width="17" height="12" viewBox="0 0 17 12"><circle cx="11.2" cy="6" r="4.9" fill="#999" stroke="#444" stroke-width="1.2"/><circle cx="5.8" cy="6" r="4.9" fill="none" stroke="#444" stroke-width="1.2"/><path d="M8.5 1.9 Q6.7 6 8.5 10.1 Q10.3 6 8.5 1.9Z" fill="#fff" stroke="#444" stroke-width="1"/></svg>
<div class="abs" style="left:7px;top:469px;width:188px;height:7px;background:#bdbdbd"></div>
<div class="abs" style="left:7px;top:483px;width:220px;height:1px;background:#dedede"></div>
<div class="t" style="left:11.5px;top:494.15px;font-size:14px;color:#333;letter-spacing:0.2px;-webkit-text-stroke:0.4px #333">Parts (4)</div>
<div class="abs" style="left:216px;top:518px;width:7px;height:138px;background:#c9d7e4"></div>
<div class="abs" style="left:216px;top:656px;width:7px;height:14px;background:#f1f3f6"></div>
<div class="t" style="left:28.8px;top:524.4px;font-size:14px;color:#333;letter-spacing:-0.15px">Part 1</div>
<div class="t" style="left:28.8px;top:553.15px;font-size:14px;color:#333;letter-spacing:-0.15px">Part 2</div>
<div class="t" style="left:28.8px;top:582.4px;font-size:14px;color:#333;letter-spacing:-0.15px">Part 3</div>
<div class="t" style="left:28.8px;top:610.65px;font-size:14px;color:#333;letter-spacing:-0.15px">Part 4</div>
</div>
<div id="dlg"></div>
<div id="dcontent">
<div class="t" style="left:233.5px;top:95.85px;font-size:14px;color:#333;letter-spacing:0px;-webkit-text-stroke:0.45px #333">Boolean 1</div>
<div class="abs" style="left:407px;top:87px;width:31px;height:31px;background:#02a002"></div>
<svg class="abs" style="left:407px;top:87px" width="31" height="31" viewBox="0 0 31 31"><path d="M8 15.5 L13 20.5 L23.5 10" fill="none" stroke="#fff" stroke-width="3.6" stroke-linecap="round" stroke-linejoin="round"/></svg>
<svg class="abs" style="left:445px;top:94px" width="17" height="17" viewBox="0 0 17 17"><path d="M3.5 3.5 L13.5 13.5 M13.5 3.5 L3.5 13.5" stroke="#da5128" stroke-width="2.9" stroke-linecap="butt"/></svg>
<div class="abs" style="left:227px;top:118px;width:242px;height:1px;background:#d9d9d9"></div>
<div class="t" style="left:244.5px;top:127.27px;font-size:13.5px;color:#333;letter-spacing:-0.2px">Union</div>
<div class="t" style="left:313px;top:127.27px;font-size:13.5px;color:#2157a0;letter-spacing:0px;-webkit-text-stroke:0.4px #2157a0">Subtract</div>
<div class="t" style="left:399.8px;top:127.27px;font-size:13.5px;color:#333;letter-spacing:-0.1px">Intersect</div>
<div class="abs" style="left:227px;top:146px;width:242px;height:1px;background:#e3e3e3"></div>
<div class="abs" style="left:295px;top:145px;width:87px;height:2.5px;background:#1d4f8e"></div>
<div class="abs" style="left:230px;top:153px;width:235px;height:75px;border:1px solid #31608f;border-radius:3px;background:linear-gradient(#d9eefa 0,#d9eefa 46px,#e2f3fb 46px)"></div>
<div class="t" style="left:237px;top:160.69px;font-size:11px;color:#6b7a85">Tools</div>
<div class="t" style="left:238px;top:180.9px;font-size:14px;color:#2a2a2a;letter-spacing:-0.15px">Part 1</div>
<svg class="abs" style="left:443.5px;top:184.2px" width="9" height="9" viewBox="0 0 9 9"><path d="M1 1 L8 8 M8 1 L1 8" stroke="#aab3b8" stroke-width="1.2"/></svg>
<div class="t" style="left:238px;top:207.9px;font-size:14px;color:#2a2a2a;letter-spacing:-0.15px">Part 2</div>
<svg class="abs" style="left:443.5px;top:211.2px" width="9" height="9" viewBox="0 0 9 9"><path d="M1 1 L8 8 M8 1 L1 8" stroke="#aab3b8" stroke-width="1.2"/></svg>
<div class="abs" style="left:230px;top:233px;width:235px;height:109px;border:1px solid #dcdcdc;border-radius:3px;background:#fff"></div>
<div class="t" style="left:237px;top:241.99px;font-size:11px;color:#777">Targets</div>
<div class="t" style="left:238px;top:261.85px;font-size:14px;color:#2a2a2a;letter-spacing:-0.15px">Part 3</div>
<svg class="abs" style="left:443.5px;top:265.2px" width="9" height="9" viewBox="0 0 9 9"><path d="M1 1 L8 8 M8 1 L1 8" stroke="#b4b4b4" stroke-width="1.2"/></svg>
<div class="t" style="left:238px;top:288.15px;font-size:14px;color:#2a2a2a;letter-spacing:-0.15px">Part 5</div>
<svg class="abs" style="left:443.5px;top:291.5px" width="9" height="9" viewBox="0 0 9 9"><path d="M1 1 L8 8 M8 1 L1 8" stroke="#b4b4b4" stroke-width="1.2"/></svg>
<div class="t" style="left:238px;top:314.85px;font-size:14px;color:#2a2a2a;letter-spacing:-0.15px">Part 6</div>
<svg class="abs" style="left:443.5px;top:318.2px" width="9" height="9" viewBox="0 0 9 9"><path d="M1 1 L8 8 M8 1 L1 8" stroke="#b4b4b4" stroke-width="1.2"/></svg>
<div class="abs" style="left:231px;top:358.5px;width:12.5px;height:12.5px;border:1px solid #d6d6d6;border-radius:2px"></div>
<div class="t" style="left:249px;top:357.75px;font-size:14px;color:#7a7a7a;letter-spacing:-0.1px">Offset</div>
<div class="abs" style="left:231px;top:388.5px;width:12.5px;height:12.5px;border:1.5px solid #3c63a0;border-radius:2px;box-shadow:0 0 2px rgba(60,120,200,.5)"></div>
<div class="t" style="left:249px;top:387.85px;font-size:14px;color:#666;letter-spacing:-0.1px">Keep tools</div>
<svg class="abs" style="left:230px;top:415px" width="240" height="22" viewBox="0 0 240 22"><path d="M4 11 H127" stroke="#5e5e5e" stroke-width="1.8"/><circle cx="117" cy="11" r="6" fill="#fff" stroke="#555" stroke-width="1.4"/><circle cx="228.3" cy="11" r="6.6" fill="#9a9a9a"/><path d="M226 8.8 Q226 6.6 228.4 6.6 Q230.6 6.7 230.6 8.6 Q230.6 9.8 229.3 10.5 Q228.5 11 228.5 12.3" fill="none" stroke="#fff" stroke-width="1.8"/><circle cx="228.5" cy="14.6" r="1.1" fill="#fff"/></svg>
</div>

<div id="bottombar"></div>
<svg class="abs" style="left:9px;top:696px" width="19" height="18" viewBox="0 0 19 18"><path d="M0.5 1.5 H17.5" stroke="#666" stroke-width="1.6"/><circle cx="6.5" cy="9" r="4.5" fill="none" stroke="#666" stroke-width="1.7"/><path d="M9.5 12.5 L13 16.5" stroke="#666" stroke-width="1.9"/><path d="M13 6.5 H17.5 M13.5 10 H17.5" stroke="#666" stroke-width="1.6"/></svg>
<svg class="abs" style="left:51px;top:696px" width="17" height="17" viewBox="0 0 17 17"><path d="M1 8.5 H16 M8.5 1 V16" stroke="#666" stroke-width="3"/></svg>
<div class="tab" style="left:84px;width:220px"></div>
<div class="tab" style="left:306px;width:220px"></div>
<div class="abs" style="left:528px;top:688px;width:220px;height:28px;background:#fff;border-radius:0 0 2px 2px"></div>
<div class="abs" style="left:528px;top:716px;width:220px;height:2px;background:#124c8e"></div>
<svg class="abs" style="left:96px;top:691px" width="20" height="21" viewBox="0 0 20 21"><path d="M1.2 4.5 L4.5 1.2 H18.5 V19.5 H4.5 L1.2 16.2 Z" fill="#fff" stroke="#222" stroke-width="1.6" stroke-linejoin="round"/><path d="M4.5 5.5 H18" stroke="#555" stroke-width="1"/><rect x="4.5" y="5" width="10" height="10" fill="#8a8a8a"/><path d="M1.5 4.5 L4.5 5 V15" stroke="#777" stroke-width="0.8" fill="none"/></svg>
<svg class="abs" style="left:317px;top:691px" width="22" height="21" viewBox="0 0 22 21"><path d="M1 8 L3 5.5 H8.5 L10 7.5 V20 H3 L1 18 Z" fill="#fff" stroke="#222" stroke-width="1.6" stroke-linejoin="round"/><path d="M3 8 V19 M3 8 H9.5" stroke="#888" stroke-width="0.8"/><path d="M10.5 3 L12.5 1 H18 L20.5 3.5 V20 H12.5 L10.5 18 Z" fill="#fff" stroke="#222" stroke-width="1.6" stroke-linejoin="round"/><path d="M13 3.5 V19 M13 3.5 H20" stroke="#888" stroke-width="0.8"/></svg>
<svg class="abs" style="left:539px;top:691px" width="22" height="21" viewBox="0 0 22 21"><path d="M1 8 L3 5.5 H8.5 L10 7.5 V20 H3 L1 18 Z" fill="#fff" stroke="#222" stroke-width="1.6" stroke-linejoin="round"/><path d="M3 8 V19 M3 8 H9.5" stroke="#888" stroke-width="0.8"/><path d="M10.5 3 L12.5 1 H18 L20.5 3.5 V20 H12.5 L10.5 18 Z" fill="#fff" stroke="#222" stroke-width="1.6" stroke-linejoin="round"/><path d="M13 3.5 V19 M13 3.5 H20" stroke="#888" stroke-width="0.8"/></svg>
<div class="t" style="left:120px;top:692.68px;font-size:15.5px;color:#666;letter-spacing:-0.1px">Assembly 1</div>
<div class="t" style="left:343px;top:692.68px;font-size:15.5px;color:#666;letter-spacing:-0.1px">Part Studio 1</div>
<div class="t" style="left:565px;top:692.68px;font-size:15.5px;color:#333;letter-spacing:-0.1px">Multi Part Build</div>
<div class="abs" style="left:-9px;top:712px;width:14px;height:14px;border-radius:50%;border:3px solid #1d2a44;background:#dfe6f0"></div>
</body></html>
